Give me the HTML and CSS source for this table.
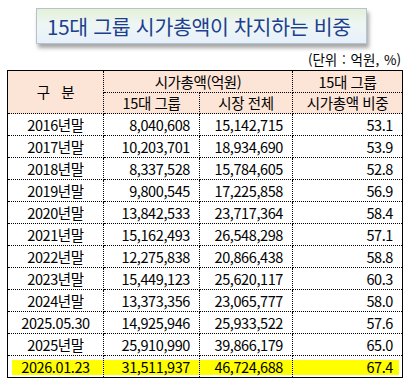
FILE: index.html
```html
<!DOCTYPE html>
<html lang="ko">
<head>
<meta charset="utf-8">
<link rel="stylesheet" href="styles.css">
</head>
<body>
<div class="page">
  <div class="title">15대 그룹 시가총액이 차지하는 비중</div>
  <div class="unit">(단위 : 억원, %)</div>
  <table class="data">
    <colgroup>
      <col class="c1"><col class="c2"><col class="c3"><col class="c4">
    </colgroup>
    <thead>
      <tr class="h1">
        <th rowspan="2" class="gubun">구 분</th>
        <th colspan="2">시가총액(억원)</th>
        <th>15대 그룹</th>
      </tr>
      <tr class="h2">
        <th>15대 그룹</th>
        <th>시장 전체</th>
        <th>시가총액 비중</th>
      </tr>
    </thead>
    <tbody>
      <tr><td>2016년말</td><td>8,040,608</td><td>15,142,715</td><td>53.1</td></tr>
      <tr><td>2017년말</td><td>10,203,701</td><td>18,934,690</td><td>53.9</td></tr>
      <tr><td>2018년말</td><td>8,337,528</td><td>15,784,605</td><td>52.8</td></tr>
      <tr><td>2019년말</td><td>9,800,545</td><td>17,225,858</td><td>56.9</td></tr>
      <tr><td>2020년말</td><td>13,842,533</td><td>23,717,364</td><td>58.4</td></tr>
      <tr><td>2021년말</td><td>15,162,493</td><td>26,548,298</td><td>57.1</td></tr>
      <tr><td>2022년말</td><td>12,275,838</td><td>20,866,438</td><td>58.8</td></tr>
      <tr><td>2023년말</td><td>15,449,123</td><td>25,620,117</td><td>60.3</td></tr>
      <tr><td>2024년말</td><td>13,373,356</td><td>23,065,777</td><td>58.0</td></tr>
      <tr><td>2025.05.30</td><td>14,925,946</td><td>25,933,522</td><td>57.6</td></tr>
      <tr><td>2025년말</td><td>25,910,990</td><td>39,866,179</td><td>65.0</td></tr>
      <tr class="hl"><td>2026.01.23</td><td>31,511,937</td><td>46,724,688</td><td>67.4</td></tr>
    </tbody>
  </table>
</div>
</body>
</html>
```
FILE: styles.css
```css
html, body {
  margin: 0;
  padding: 0;
  background: #ffffff;
}
body {
  font-family: "Noto Sans CJK KR", "Noto Sans", sans-serif;
  color: #000;
}
.page {
  width: 408px;
  height: 387px;
  padding-top: 8px;
  box-sizing: border-box;
}
.title {
  margin-left: 36px;
  width: 331px;
  height: 36px;
  box-sizing: border-box;
  border: 1px solid #b4c3cf;
  background: linear-gradient(to bottom, #e3f1d8 0%, #eef6f4 45%, #e6f0fa 100%);
  box-shadow: 2px 4px 4px rgba(0, 0, 0, 0.35);
  display: flex;
  align-items: center;
  justify-content: center;
  padding-right: 5px;
  color: #1e3f8f;
  font-size: 20.5px;
  line-height: 1;
  letter-spacing: -0.3px;
}
.unit {
  margin-top: 7px;
  padding-right: 7px;
  text-align: right;
  font-size: 13.5px;
  line-height: 16px;
  height: 19px;
  word-spacing: 1px;
}
.data {
  margin-left: 7px;
  width: 395px;
  border-collapse: collapse;
  table-layout: fixed;
  border: 1.5px solid #000;
  font-size: 14.5px;
  letter-spacing: -0.4px;
}
.c1 { width: 96px; }
.c2 { width: 96px; }
.c3 { width: 93px; }
.c4 { width: 110px; }
.data th, .data td {
  border: 1px dotted #000;
  padding: 0 9px 0 0;
  line-height: 20px;
  white-space: nowrap;
}
.data th {
  background: #fce4d6;
  font-weight: normal;
  text-align: center;
  padding: 0;
}
.data th.gubun {
  word-spacing: 8px;
}
.data tr.h1 { height: 22px; }
.data tr.h2 { height: 21px; }
.data tbody tr { height: 22px; }
.data td { text-align: right; }
.data td:first-child {
  text-align: center;
  padding: 0;
}
.data tr.hl td {
  background-image: linear-gradient(#ffff00, #ffff00);
  background-repeat: no-repeat;
  background-size: 100% 15px;
  background-position: 0 4px;
}
.data tr.hl td:first-child {
  background-size: calc(100% - 4px) 15px;
  background-position: right 4px;
}
.data tr.hl td:last-child {
  background-size: calc(100% - 3px) 15px;
  background-position: left 4px;
}
```
